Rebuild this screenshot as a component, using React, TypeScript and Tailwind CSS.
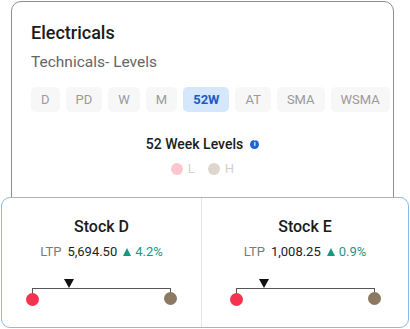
import React from "react"

const tabs = ["D", "PD", "W", "M", "52W", "AT", "SMA", "WSMA"]

const stocks = [
    { name: "Stock D", ltp: "5,694.50", change: "4.2%", pos: 26 },
    { name: "Stock E", ltp: "1,008.25", change: "0.9%", pos: 20 },
]

const LevelBar = ({ pos }: { pos: number }) => {
    return (
        <div className="relative h-[30px] w-[151px] mx-auto">
            <div className="absolute left-[6px] right-[6px] top-[10px] h-[9px] border-t-[1.5px] border-l-[1.5px] border-r-[1.5px] border-[#555]">
                <div className="absolute -top-[10px] -ml-[5px] w-0 h-0 border-l-[5px] border-r-[5px] border-t-[9px] border-l-transparent border-r-transparent border-t-[#111]" style={{ left: `${pos}%` }} />
            </div>
            <div className="absolute left-0 top-[15px] w-[13px] h-[13px] rounded-full bg-[#f5334f]" />
            <div className="absolute right-0 top-[14px] w-[13px] h-[13px] rounded-full bg-[#8d7961]" />
        </div>
    )
}

export default function App() {
    return (
        <div className="w-[410px] h-[329px] bg-white pt-[1px] overflow-hidden" style={{ fontFamily: "Roboto, 'Liberation Sans', sans-serif" }}>
            <div className="mx-[11px] w-[383px] h-[230px] border border-[#8e8e8e] rounded-[10px] px-[19px] pt-[19px]">
                <div className="text-[18px] leading-[24px] text-[#1b1b1b] font-medium">Electricals</div>
                <div className="text-[15.5px] leading-[20px] text-[#656565] mt-[7px]">Technicals- Levels</div>
                <div className="flex gap-[6px] mt-[15px]">
                    {tabs.map((t) => (
                        <div key={t} className={`h-[25px] px-[10px] flex items-center rounded-[5px] text-[13px] ${t === "52W" ? "bg-[#d5e7fc] text-[#1a5cc4] font-bold" : "bg-[#f7f7f7] text-[#9a9a9a]"}`}>
                            {t}
                        </div>
                    ))}
                </div>
                <div className="flex items-center justify-center gap-[7px] mt-[23px]">
                    <span className="text-[14px] leading-[18px] text-[#1b1b1b] font-medium">52 Week Levels</span>
                    <span className="w-[9px] h-[9px] rounded-full bg-[#1e63d0] text-white text-[7px] leading-[9px] font-bold flex items-center justify-center">i</span>
                </div>
                <div className="flex items-center justify-center gap-[5px] mt-[8px] text-[13px] leading-[16px]">
                    <span className="w-[12px] h-[12px] rounded-full bg-[#fbc6ce]" />
                    <span className="text-[#cfcfcf] mr-[8px]">L</span>
                    <span className="w-[12px] h-[12px] rounded-full bg-[#ddd6cd]" />
                    <span className="text-[#cfcfcf]">H</span>
                </div>
            </div>
            <div className="relative -mt-[34px] mx-[1px] w-[408px] h-[131px] bg-white border-[1.5px] border-[#86bdf0] rounded-[9px] flex">
                {stocks.map((s, i) => (
                    <div key={s.name} className={`flex flex-col pt-[18px] ${i === 0 ? "w-[200px] border-r border-[#e6e6e6]" : "flex-1"}`}>
                        <div className="text-center text-[16px] leading-[22px] text-[#1b1b1b] font-medium">{s.name}</div>
                        <div className="flex items-center justify-center gap-[6px] mt-[6px] text-[13px] leading-[16px]">
                            <span className="text-[#7a7a7a]">LTP</span>
                            <span className="text-[#222]">{s.ltp}</span>
                            <span className="text-[#17997f] flex items-center gap-[4px]">
                                <span className="w-0 h-0 border-l-[4px] border-r-[4px] border-b-[8px] border-l-transparent border-r-transparent border-b-[#17997f]" />
                                {s.change}
                            </span>
                        </div>
                        <div className="mt-[18px]">
                            <LevelBar pos={s.pos} />
                        </div>
                    </div>
                ))}
            </div>
        </div>
    )
}
